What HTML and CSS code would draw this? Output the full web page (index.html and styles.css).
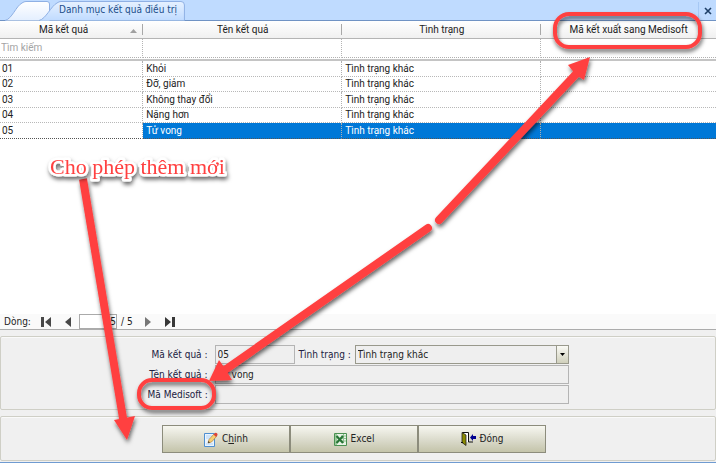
FILE: index.html
```html
<!DOCTYPE html>
<html lang="vi">
<head>
<meta charset="utf-8">
<meta name="viewport" content="width=device-width, initial-scale=1">
<title>Danh mục kết quả điều trị</title>
<link rel="stylesheet" href="styles.css">
</head>
<body>
<div class="window">
  <header class="tabbar">
    <button class="tab tab-blank" type="button" aria-label="Tab">
      <svg class="tab-shape" viewBox="0 0 46 19" aria-hidden="true"><path d="M0 19.500C7 18 11 5 17 2Q19 .5 21 .5H42Q44.500 .5 44.500 3V19.500" fill="url(#tabBlank)" stroke="#8fb0e4"/><defs><linearGradient id="tabBlank" x1="0" y1="0" x2="0" y2="1"><stop offset="0" stop-color="#fff"/><stop offset="1" stop-color="#e4efff"/></linearGradient></defs></svg>
    </button>
    <button class="tab tab-active" type="button">
      <svg class="tab-shape" viewBox="0 0 146 19" preserveAspectRatio="none" aria-hidden="true"><path d="M0 19.500C7 18 12 5 18 2Q20 .5 22 .5H142Q145.500 .5 145.500 4V19.500" fill="url(#tabActive)" stroke="#8fb0e4"/><defs><linearGradient id="tabActive" x1="0" y1="0" x2="0" y2="1"><stop offset="0" stop-color="#e6f1ff"/><stop offset="1" stop-color="#c0dbff"/></linearGradient></defs></svg>
      <span class="tab-text">Danh mục kết quả điều trị</span>
    </button>
    <button class="close" type="button" aria-label="Close"><svg width="8" height="8" viewBox="0 0 8 8"><path d="M1 1l6 6M7 1L1 7" stroke="#1e4068" stroke-width="1.600"/></svg></button>
  </header>

  <main class="grid">
    <table class="table">
      <colgroup><col class="col-code"><col class="col-name"><col class="col-name"><col class="col-export"></colgroup>
      <thead>
        <tr class="heads">
          <th scope="col">Mã kết quả<svg class="sort" width="7" height="4" viewBox="0 0 7 4" aria-hidden="true"><path d="M0 4L3.500 0 7 4z" fill="#a0a0a0"/></svg></th>
          <th scope="col">Tên kết quả</th>
          <th scope="col">Tình trạng</th>
          <th scope="col">Mã kết xuất sang Medisoft</th>
        </tr>
        <tr class="filters">
          <td><input type="text" placeholder="Tìm kiếm" aria-label="Tìm kiếm mã kết quả"></td>
          <td><input type="text" aria-label="Tìm kiếm tên kết quả"></td>
          <td><input type="text" aria-label="Tìm kiếm tình trạng"></td>
          <td><input type="text" aria-label="Tìm kiếm mã kết xuất"></td>
        </tr>
        <tr class="divider"><td colspan="4"></td></tr>
      </thead>
      <tbody>
        <tr><td>01</td><td>Khỏi</td><td>Tình trạng khác</td><td></td></tr>
        <tr><td>02</td><td>Đỡ, giảm</td><td>Tình trạng khác</td><td></td></tr>
        <tr><td>03</td><td>Không thay đổi</td><td>Tình trạng khác</td><td></td></tr>
        <tr><td>04</td><td>Nặng hơn</td><td>Tình trạng khác</td><td></td></tr>
        <tr class="selected"><td>05</td><td>Tử vong</td><td>Tình trạng khác</td><td></td></tr>
      </tbody>
    </table>
  </main>

  <nav class="pager">
    <label for="row">Dòng:</label>
    <button type="button" class="nav first" aria-label="First"><svg width="10" height="10" viewBox="0 0 10 10"><path d="M0 0h3v10H0zM10 0v10L4 5z" fill="#484848"/></svg></button>
    <button type="button" class="nav prev" aria-label="Previous"><svg width="6" height="10" viewBox="0 0 6 10"><path d="M6 0v10L0 5z" fill="#484848"/></svg></button>
    <input id="row" type="text" value="5">
    <span class="total">/ 5</span>
    <button type="button" class="nav next" aria-label="Next"><svg width="6" height="10" viewBox="0 0 6 10"><path d="M0 0v10l6-5z" fill="#777"/></svg></button>
    <button type="button" class="nav last" aria-label="Last"><svg width="10" height="10" viewBox="0 0 10 10"><path d="M7 0h3v10H7zM0 0v10l6-5z" fill="#383838"/></svg></button>
  </nav>

  <section class="panels">
    <form class="panel form">
      <label for="code">Mã kết quả :</label>
      <div class="pair">
        <input id="code" type="text" value="05" readonly>
        <label for="status">Tình trạng :</label>
        <div class="select">
          <select id="status"><option>Tình trạng khác</option></select>
          <span class="arrow"><svg width="5" height="3" viewBox="0 0 5 3"><path d="M0 0h5L2.500 3z" fill="#000"/></svg></span>
        </div>
      </div>
      <label for="name">Tên kết quả :</label>
      <input id="name" type="text" value="Tử vong" readonly>
      <label for="medisoft">Mã Medisoft :</label>
      <input id="medisoft" type="text" readonly>
    </form>
    <div class="panel actions">
      <button type="button">
        <svg width="14" height="15" viewBox="0 0 14 15" aria-hidden="true"><path d="M.5 1.500h10v13H.5z" fill="#e9f4ff" stroke="#4f8fd0"/><path d="M2 4h6M2 6h4M2 12h7" stroke="#b4d3f2"/><path d="M4 11l1-3.500L10 2l2.500 2.500L7.500 10z" fill="#f8cf72" stroke="#b08038" stroke-width=".7"/><path d="M9.500 2.500L11 1q1-.7 2 .3t.3 2L12 5z" fill="#dc4438"/><path d="M4 11l.5-2 1.500 1.500z" fill="#333"/></svg>
        <span>C<u>h</u>inh</span>
      </button>
      <button type="button">
        <svg width="13" height="13" viewBox="0 0 13 13" aria-hidden="true"><path d="M.5 .5h12v12H.5z" fill="#e8f3e6" stroke="#4b9152"/><path d="M7 3h5M7 5.500h5M7 8h5M9.500 1v9" stroke="#8fc091"/><path d="M1 1h2v11H1z" fill="#9ccb9c"/><path d="M2.500 3l6.500 7M9 3L2.500 10" stroke="#287535" stroke-width="2.200"/></svg>
        <span>Excel</span>
      </button>
      <button type="button">
        <svg width="15" height="14" viewBox="0 0 15 14" aria-hidden="true"><path d="M1.500 10V.5h6V10H12" fill="#fff" stroke="#111"/><path d="M1 .5l4 2.500v10.500L1 10.500z" fill="#8a8a00" stroke="#222" stroke-width=".8"/><path d="M0 10.500h2" stroke="#111"/><path d="M15 4v3h-3v2L9 5.500 12 2v2z" fill="#000090"/></svg>
        <span>Đóng</span>
      </button>
    </div>
  </section>

  <svg class="notes" width="716" height="463" viewBox="0 0 716 463">
    <defs><filter id="shade" filterUnits="userSpaceOnUse" x="0" y="0" width="716" height="463"><feDropShadow dx="1" dy="3" stdDeviation="2" flood-color="#000" flood-opacity=".6"/></filter></defs>
    <g filter="url(#shade)" fill="none" stroke="#ff4040" stroke-linecap="round">
      <path d="M83 179L124 424" stroke-width="8" stroke-linecap="butt"/>
      <path d="M439 220L577 73" stroke-width="8"/>
      <path d="M428 228L222 372" stroke-width="8"/>
      <g fill="#ff4040" stroke="none">
        <path d="M127 440L114 420L135 416z"/>
        <path d="M590 57L584 80L576 75L568 65z"/>
        <path d="M209 381L219 360L224 367L232 380z"/>
      </g>
      <rect x="555" y="14" width="145" height="33" rx="14" stroke-width="4"/>
      <rect x="139" y="380" width="75" height="28" rx="13" stroke-width="4"/>
    </g>
    <text class="note-text" x="50" y="174" filter="url(#shade)">Cho phép thêm mới</text>
  </svg>
</div>
</body>
</html>
```
FILE: styles.css
```css
* { box-sizing: border-box; }

body {
  margin: 0;
  background: #f0f0f0;
  color: #222;
  font: 10px/14px Roboto, "Liberation Sans", sans-serif;
}

button, input, select {
  margin: 0;
  padding: 0;
  border: 0;
  border-radius: 0;
  background: none;
  color: inherit;
  font: inherit;
}

svg { display: block; flex: none; }

.window {
  position: relative;
  display: flex;
  flex-direction: column;
  min-height: 100vh;
  overflow: hidden;
  background: #fff;
  border-bottom: 1px solid #6f9bd1;
}

/* Tabs */
.tabbar {
  display: flex;
  align-items: flex-end;
  height: 21px;
  padding-left: 5px;
  background: #bfdbff;
  border-bottom: 1px solid #7093c4;
  font: 10px/14px "DejaVu Sans Condensed", Tahoma, sans-serif;
}

.tab { position: relative; height: 19px; }
.tab-blank { width: 46px; }
.tab-active {
  margin-left: -12px;
  padding: 0 8px 2px 20px;
  color: #204d89;
}
.tab-shape { position: absolute; inset: 0; width: 100%; height: 100%; overflow: visible; }
.tab-text { position: relative; }

.close {
  display: grid;
  place-items: center;
  width: 18px;
  height: 18px;
  margin-left: auto;
  border-left: 1px solid #a6c8f4;
}

/* Grid */
.grid { flex: 1; }

.table {
  width: 100%;
  table-layout: fixed;
  border-collapse: separate;
  border-spacing: 0;
}
.col-code { width: 20%; }
.col-name { width: 27.8%; }
.table th, .table td { padding: 0; text-align: left; white-space: nowrap; line-height: 14px; }

.heads th {
  position: relative;
  height: 18px;
  background: linear-gradient(#fff, #f0f0f0);
  border-bottom: 1px solid #b4b4b4;
  text-align: center;
  font-weight: normal;
}
.heads th:first-child { padding-right: 16px; }
.heads th:not(:last-child)::after {
  content: "";
  position: absolute;
  top: 3px;
  right: 0;
  width: 1px;
  height: 11px;
  background: #a8a8a8;
}
.sort { position: absolute; right: 6px; top: 8px; }

.filters td { height: 19px; border-right: 1px dotted #b4b4b4; border-bottom: 1px dotted #b0b0b0; }
.filters input { display: block; width: 100%; padding-left: 1px; outline: 0; }
.filters input::placeholder { color: #a4a4a4; opacity: 1; }

.divider td { height: 3px; border-bottom: 2px solid #c4c4c4; }

.table tbody tr { height: 15px; }
.table tbody tr:nth-child(odd) { height: 16px; }
.table tbody td { padding-left: 3px; border-right: 1px dotted #b0b0b0; border-bottom: 1px dotted #b8b8b8; }
.table tbody td:first-child { padding-left: 2px; }
.table td:last-child { border-right: 0; }
.table .selected td { background: #0078d7; color: #fff; border-bottom-color: #555; }
.table .selected td:first-child { background: #fff; color: #222; }

/* Pager */
.pager {
  display: flex;
  align-items: center;
  height: 16px;
  padding-left: 4px;
  background: #fafafa;
  border-bottom: 1px solid #acacac;
  font: 10px/14px "DejaVu Sans Condensed", Tahoma, sans-serif;
}
.pager label { width: 37px; }
.pager input {
  width: 38px;
  height: 15px;
  border: 1px solid #aaa;
  background: #fff;
  text-align: right;
}
.total { width: 20px; padding-left: 4px; }
.prev { margin: 0 8px 0 14px; }
.next { margin-left: 8px; }
.last { margin-left: 14px; }

/* Entry form and actions */
.panels {
  display: grid;
  gap: 6px;
  padding: 6px 0 1px;
  background: #f0f0f0;
  font: 10px/14px "DejaVu Sans Condensed", Tahoma, sans-serif;
}
.panel { border: 1px solid #cfcfc6; box-shadow: inset 0 1px #fafafa; border-radius: 2px; }

.form {
  display: grid;
  grid-template-columns: 60px minmax(0, 354px);
  justify-content: center;
  align-items: center;
  gap: 1px 7px;
  padding: 8px 0 5px;
  color: #202040;
}
.form label { text-align: right; white-space: nowrap; }
.form input, .select {
  width: 100%;
  height: 19px;
  padding-left: 2px;
  border: 1px solid #b4b4b4;
  background: #efefef;
  color: #222;
}
.pair { display: flex; align-items: center; gap: 4px; }
.pair input { flex: none; width: 80px; }
.pair label { flex: none; width: 52px; }
.pair .select { display: flex; flex: 1; padding: 0; border-color: #99998c; }
.select select { flex: 1; min-width: 0; padding-left: 2px; appearance: none; outline: 0; }
.arrow {
  display: grid;
  place-items: center;
  width: 12px;
  border-left: 1px solid #99998c;
  background: linear-gradient(#fafaf5, #d0d0bc);
}

.actions { display: flex; justify-content: center; padding: 8px 8px 7px 0; }
.actions button {
  display: flex;
  justify-content: center;
  align-items: center;
  gap: 4px;
  width: 128px;
  height: 28px;
  border: 1px solid #8c8c7c;
  background: linear-gradient(#f7f7f0, #dadacb 55%, #c4c4aa);
}

/* Callouts drawn over the window */
.notes { position: absolute; top: 0; left: 0; pointer-events: none; }
.note-text {
  fill: #ff4040;
  stroke: #fff;
  stroke-width: 5px;
  stroke-linejoin: round;
  paint-order: stroke;
  font: 22px "Liberation Serif", "Times New Roman", serif;
}
```
